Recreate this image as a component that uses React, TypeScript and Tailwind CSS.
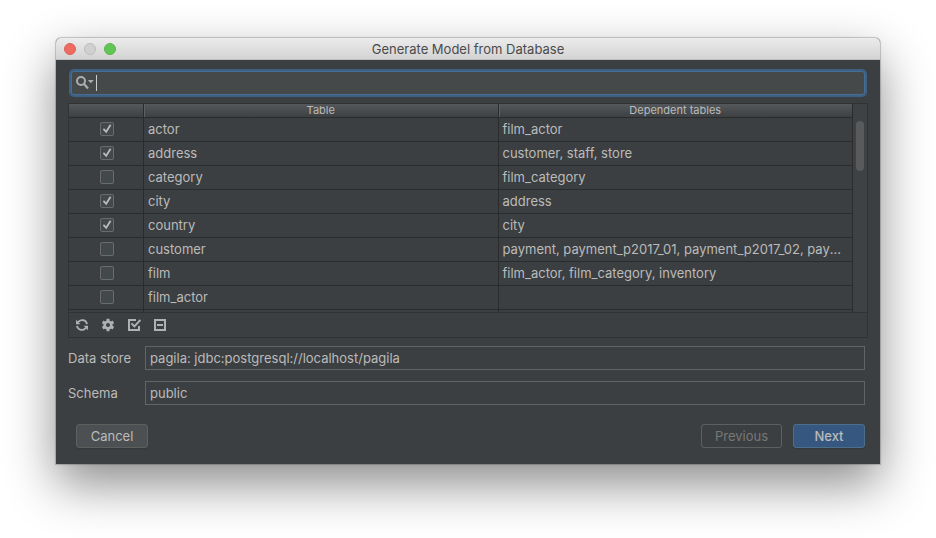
import React from "react";

type Row = { name: string; dependents: string; selected: boolean };

const rows: Row[] = [
  { name: "actor", dependents: "film_actor", selected: true },
  { name: "address", dependents: "customer, staff, store", selected: true },
  { name: "category", dependents: "film_category", selected: false },
  { name: "city", dependents: "address", selected: true },
  { name: "country", dependents: "city", selected: true },
  {
    name: "customer",
    dependents: "payment, payment_p2017_01, payment_p2017_02, payment_p2017_03",
    selected: false,
  },
  { name: "film", dependents: "film_actor, film_category, inventory", selected: false },
  { name: "film_actor", dependents: "", selected: false },
];

function SearchIcon() {
  return (
    <svg width="18" height="14" viewBox="0 0 18 14" fill="none" aria-hidden="true">
      <circle cx="5" cy="5" r="4" stroke="#adadad" strokeWidth="2" />
      <path d="M8 8l4 4.5" stroke="#adadad" strokeWidth="2.2" />
      <path d="M11.8 4h6l-3 3.2z" fill="#adadad" />
    </svg>
  );
}

function RefreshIcon() {
  return (
    <svg width="14" height="14" viewBox="0 0 14 14" fill="none" aria-hidden="true">
      <path d="M3 4.2A5 5 0 0 1 12 6.2" stroke="#afb1b3" strokeWidth="1.8" />
      <path d="M11 9.8A5 5 0 0 1 2 7.8" stroke="#afb1b3" strokeWidth="1.8" />
      <path d="M1 1.8v4.4h4.4z" fill="#afb1b3" />
      <path d="M13 12.2V7.8H8.6z" fill="#afb1b3" />
    </svg>
  );
}

function GearIcon() {
  return (
    <svg width="14" height="14" viewBox="0 0 14 14" aria-hidden="true">
      <g fill="#afb1b3">
        <rect x="5.5" y="0.8" width="3" height="12.4" />
        <rect x="5.5" y="0.8" width="3" height="12.4" transform="rotate(60 7 7)" />
        <rect x="5.5" y="0.8" width="3" height="12.4" transform="rotate(120 7 7)" />
        <circle cx="7" cy="7" r="4.6" />
      </g>
      <circle cx="7" cy="7" r="2" fill="#3c3f41" />
    </svg>
  );
}

function SelectAllIcon() {
  return (
    <svg width="14" height="14" viewBox="0 0 14 14" fill="none" aria-hidden="true">
      <path d="M9 2H2v10h10V8" stroke="#afb1b3" strokeWidth="2" />
      <path d="M4.4 5.4l3 3L13.4 2" stroke="#afb1b3" strokeWidth="2" />
    </svg>
  );
}

function DeselectAllIcon() {
  return (
    <svg width="14" height="14" viewBox="0 0 14 14" fill="none" aria-hidden="true">
      <rect x="2" y="2" width="10" height="10" stroke="#afb1b3" strokeWidth="2" />
      <path d="M4 7h6" stroke="#afb1b3" strokeWidth="2" />
    </svg>
  );
}

const tools = [
  { label: "Refresh", icon: <RefreshIcon /> },
  { label: "Settings", icon: <GearIcon /> },
  { label: "Select all", icon: <SelectAllIcon /> },
  { label: "Deselect all", icon: <DeselectAllIcon /> },
];

function Tick({ label, selected }: { label: string; selected: boolean }) {
  return (
    <span className="mx-auto grid size-3.5">
      <input
        type="checkbox"
        defaultChecked={selected}
        aria-label={label}
        className="peer col-start-1 row-start-1 size-3.5 appearance-none rounded-xs border border-[#6b6b6b] bg-[#43494a]"
      />
      <svg
        viewBox="0 0 14 14"
        fill="none"
        aria-hidden="true"
        className="pointer-events-none invisible col-start-1 row-start-1 size-3.5 peer-checked:visible"
      >
        <path d="M3.4 6.8l2.8 3 4.4-7" stroke="#bbbbbb" strokeWidth="1.8" />
      </svg>
    </span>
  );
}

function Field({ id, label, value }: { id: string; label: string; value: string }) {
  return (
    <div className="flex items-center">
      <label htmlFor={id} className="w-[77px] shrink-0">
        {label}
      </label>
      <input
        id={id}
        type="text"
        readOnly
        defaultValue={value}
        className="h-6 min-w-0 flex-1 border border-[#646464] bg-transparent px-1 outline-none"
      />
    </div>
  );
}

export default function App() {
  return (
    <div className="min-h-screen bg-white px-14 pt-[38px] pb-16 font-['Inter','Liberation_Sans',sans-serif] text-[13px] leading-4 text-[#bbbbbb]">
      <main className="rounded-t-[5px] bg-[#3c3f41] shadow-[0_0_1px_1px_rgba(0,0,0,0.2),0_20px_50px_rgba(0,0,0,0.46)]">
        <header className="grid h-[22px] grid-cols-[1fr_auto_1fr] items-center rounded-t-[5px] border-b border-[#bfbfbf] bg-linear-to-b from-[#ececec] to-[#d3d3d3] px-2">
          <div className="flex gap-2">
            <button type="button" aria-label="Close" className="size-3 rounded-full border border-[#e0605a] bg-[#ed6b60]" />
            <button type="button" aria-label="Minimize" className="size-3 rounded-full border border-[#bdbdbd] bg-[#d0d0d0]" />
            <button type="button" aria-label="Zoom" className="size-3 rounded-full border border-[#58b748] bg-[#62c654]" />
          </div>
          <h1 className="text-[#4b4b4b]">Generate Model from Database</h1>
        </header>

        <div className="px-3 pt-[9px] pb-4">
          <div className="mx-px flex h-7 items-center rounded-[5px] border-2 border-[#3d6185] bg-[#45494a] pl-[5px] inset-ring inset-ring-[#466d94]">
            <SearchIcon />
            <span className="ml-0.5 h-4 w-px bg-[#cccccc]" />
            <input
              type="text"
              aria-label="Search tables"
              className="h-full min-w-0 flex-1 bg-transparent px-1 outline-none"
            />
          </div>

          <section className="mt-1.5 border border-[#323232]">
            <div className="flex h-52 overflow-hidden">
              <table className="w-full min-w-0 table-fixed border-separate border-spacing-0 self-start">
                <colgroup>
                  <col className="w-[75px]" />
                  <col />
                  <col />
                </colgroup>
                <thead>
                  <tr className="h-3.5 bg-linear-to-b from-[#54585a] to-[#3c3f41] text-[11px] leading-[13px]">
                    <th aria-label="Selected" className="border-r border-b border-[#2b2b2b] p-0" />
                    <th className="border-r border-b border-[#2b2b2b] p-0 font-normal shadow-[inset_1px_0_0_#5d6062]">Table</th>
                    <th className="border-r border-b border-[#2b2b2b] p-0 font-normal shadow-[inset_1px_0_0_#5d6062]">Dependent tables</th>
                  </tr>
                </thead>
                <tbody className="align-top leading-[22px]">
                  {rows.map((row) => (
                    <tr key={row.name} className="h-6">
                      <td className="border-r border-b border-[#2b2b2b] pt-1 pr-0 pb-0 pl-0.5">
                        <Tick label={row.name} selected={row.selected} />
                      </td>
                      <td className="border-r border-b border-[#2b2b2b] px-1 py-0">{row.name}</td>
                      <td className="truncate border-r border-b border-[#2b2b2b] px-1 py-0">{row.dependents}</td>
                    </tr>
                  ))}
                  <tr className="h-6" aria-hidden="true">
                    <td className="border-r border-[#2b2b2b] p-0" />
                    <td className="border-r border-[#2b2b2b] p-0" />
                    <td className="border-r border-[#2b2b2b] p-0" />
                  </tr>
                </tbody>
              </table>
              <div className="w-3.5 shrink-0 bg-[#3f4244] px-[3px] pt-[17px]">
                <div className="h-[50px] rounded-full bg-[#595a5b]" />
              </div>
            </div>
            <div className="flex h-[25px] items-center gap-3 border-t border-[#323232] px-1.5">
              {tools.map((tool) => (
                <button key={tool.label} type="button" aria-label={tool.label} className="size-3.5">
                  {tool.icon}
                </button>
              ))}
            </div>
          </section>

          <div className="mt-2 mr-[3px] flex flex-col gap-[11px]">
            <Field id="data-store" label="Data store" value="pagila: jdbc:postgresql://localhost/pagila" />
            <Field id="schema" label="Schema" value="public" />
          </div>

          <footer className="mt-[19px] mr-[3px] ml-2 flex gap-[11px]">
            <button type="button" className="mr-auto h-6 w-[72px] rounded-[3px] border border-[#5e6060] bg-[#4c5052] shadow-[0_1px_1px_rgba(0,0,0,0.12)]">
              Cancel
            </button>
            <button type="button" disabled className="h-6 w-[81px] rounded-[3px] border border-[#5e6060] text-[#777777]">
              Previous
            </button>
            <button type="button" className="h-6 w-[72px] rounded-[3px] border border-[#4c708c] bg-[#365880] font-medium shadow-[0_1px_1px_rgba(0,0,0,0.12)]">
              Next
            </button>
          </footer>
        </div>
      </main>
    </div>
  );
}
